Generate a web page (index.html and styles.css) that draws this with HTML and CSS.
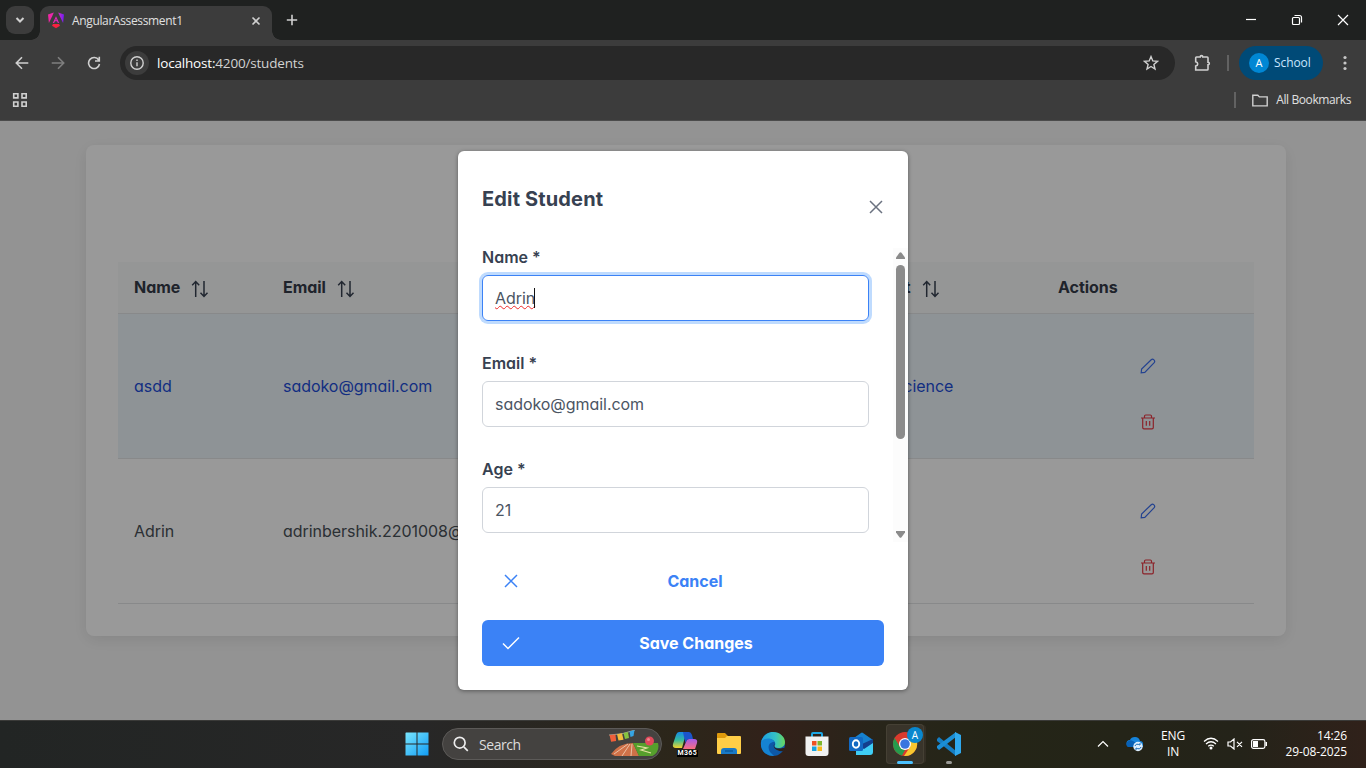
FILE: index.html
```html
<!DOCTYPE html>
<html lang="en">
<head>
<meta charset="utf-8">
<title>AngularAssessment1</title>
<link rel="stylesheet" href="styles.css">
</head>
<body>
<header class="browser">
  <div class="tabstrip">
    <div class="tab-search"><svg width="10" height="8" viewBox="0 0 10 8"><path d="M1.500 2 5 5.500 8.500 2" class="ln w2"/></svg></div>
    <div class="tab">
      <svg class="favicon" width="16" height="17" viewBox="0 0 16 17"><defs><linearGradient id="ng" x1="0" y1="0" x2="1" y2="0"><stop offset="0" stop-color="#f0279f"/><stop offset=".6" stop-color="#e026c0"/><stop offset="1" stop-color="#6a20f5"/></linearGradient></defs><path fill="url(#ng)" d="M5.800 .5 0 2.600 .9 11 4.300 4zM10.200.5 16 2.600 15.100 11 11.700 4zM8 4.200 11.200 11H9.900L9 9.200H7L6.100 11H4.800zM8 6.700 7.400 8.200H8.600z"/><path fill="#f6213f" d="M5 12h6l1 1.800L8 16.300 4 13.800z"/></svg>
      <span class="tab-title">AngularAssessment1</span>
      <svg class="tab-close" width="10" height="10" viewBox="0 0 10 10"><path class="ln" d="m1.500 1.500 7 7m0-7-7 7"/></svg>
    </div>
    <svg class="new-tab" width="12" height="12" viewBox="0 0 12 12"><path class="ln" d="M6 .8v10.400M.8 6h10.400"/></svg>
    <div class="window-controls">
      <svg width="12" height="12" viewBox="0 0 12 12"><path class="wl" d="M1 5.500h10"/></svg>
      <svg width="12" height="12" viewBox="0 0 12 12"><rect class="wl" x="1.500" y="3.500" width="7" height="7" rx="1"/><path class="wl" d="M3.500 1.500h5a2 2 0 0 1 2 2v5"/></svg>
      <svg width="12" height="12" viewBox="0 0 12 12"><path class="wl" d="m1 1 10 10m0-10L1 11"/></svg>
    </div>
  </div>
  <div class="toolbar">
    <svg width="14" height="14" viewBox="0 0 14 14"><path class="ln" d="M13.300 7H1.500M7 1.300 1.300 7 7 12.700"/></svg>
    <svg class="dim" width="14" height="14" viewBox="0 0 14 14"><path class="ln" d="M.7 7h11.800M7 1.300 12.700 7 7 12.700"/></svg>
    <svg width="14" height="14" viewBox="0 0 14 14"><path class="ln" d="M11.700 4A5.500 5.500 0 1 0 12.500 8M12.300.8v4.200H8"/></svg>
    <div class="omnibox">
      <span class="site-info"><svg width="14" height="14" viewBox="0 0 14 14"><circle class="ln thin" cx="7" cy="7" r="6.200"/><path class="ln thin" d="M7 6.200v4M7 3.600v1.400"/></svg></span>
      <span class="url">localhost:<i>4200/students</i></span>
      <svg class="star" width="16" height="16" viewBox="0 0 16 16"><path class="ln thin" d="m8 1.600 1.800 4.300 4.700.4-3.600 3.100 1.100 4.600L8 11.500 4 14l1.100-4.600L1.500 6.300l4.700-.4z"/></svg>
    </div>
    <svg class="puzzle" width="18" height="18" viewBox="0 0 18 18"><path class="ln" d="M3.500 3h3.700c0-1.800 2.600-1.800 2.600 0h4.400q.8 0 .8.800v4.400c1.800 0 1.800 2.600 0 2.600v4.400q0 .8-.8.800H2.700v-4c2.700-.4 2.700-3.700 0-4.200V3.800q0-.8.800-.8z"/></svg>
    <span class="divider"></span>
    <div class="profile"><b>A</b><span>School</span></div>
    <svg class="menu" width="4" height="16" viewBox="0 0 4 16"><g fill="#c7c7c7"><circle cx="2" cy="2.500" r="1.600"/><circle cx="2" cy="8" r="1.600"/><circle cx="2" cy="13.500" r="1.600"/></g></svg>
  </div>
  <div class="bookmarks">
    <svg width="16" height="16" viewBox="0 0 16 16"><path class="ln" d="M1.700 1.700h4.200v4.200H1.700zM10 1.700h4.200v4.200H10zM1.700 10h4.200v4.200H1.700zM10 10h4.200v4.200H10z"/></svg>
    <span class="divider"></span>
    <svg width="16" height="13" viewBox="0 0 16 13"><path class="ln thin" d="M.8 1.200h5l1.600 1.700h7.800v9H.8z"/></svg>
    <span>All Bookmarks</span>
  </div>
</header>

<main class="page">
  <section class="card">
    <div class="table">
      <div class="row head">
        <span>Name <svg class="sort" width="18" height="18" viewBox="0 0 18 18"><path d="M4.700 17V2M1.200 5.200 4.700 1.600l3.500 3.600M13 1v15M9.500 12.800l3.500 3.600 3.500-3.600"/></svg></span>
        <span>Email <svg class="sort" width="18" height="18" viewBox="0 0 18 18"><path d="M4.700 17V2M1.200 5.200 4.700 1.600l3.500 3.600M13 1v15M9.500 12.800l3.500 3.600 3.500-3.600"/></svg></span>
        <span class="dept">Department <svg class="sort" width="18" height="18" viewBox="0 0 18 18"><path d="M4.700 17V2M1.200 5.200 4.700 1.600l3.500 3.600M13 1v15M9.500 12.800l3.500 3.600 3.500-3.600"/></svg></span>
        <span>Actions</span>
      </div>
      <div class="row selected">
        <span>asdd</span><span>sadoko@gmail.com</span><span>Computer Science</span>
        <div class="actions">
          <svg class="edit" width="16" height="16" viewBox="0 0 16 16"><path d="M1.200 14.800 1.600 11 11.200 1.700c1.800-1.500 4.500 1 3 3L4.800 14.400z"/></svg>
          <svg class="trash" width="16" height="16" viewBox="0 0 16 16"><path d="M1 4h14M2.700 4v9.500a1.300 1.300 0 0 0 1.300 1.300h8a1.300 1.300 0 0 0 1.300-1.300V4M4.500 4V2.200A1.200 1.200 0 0 1 5.700 1h4.600a1.200 1.200 0 0 1 1.200 1.200V4M6.300 7v4.800M9.700 7v4.800"/></svg>
        </div>
      </div>
      <div class="row">
        <span>Adrin</span><span>adrinbershik.2201008@</span><span></span>
        <div class="actions">
          <svg class="edit" width="16" height="16" viewBox="0 0 16 16"><path d="M1.200 14.800 1.600 11 11.200 1.700c1.800-1.500 4.500 1 3 3L4.800 14.400z"/></svg>
          <svg class="trash" width="16" height="16" viewBox="0 0 16 16"><path d="M1 4h14M2.700 4v9.500a1.300 1.300 0 0 0 1.300 1.300h8a1.300 1.300 0 0 0 1.300-1.300V4M4.500 4V2.200A1.200 1.200 0 0 1 5.700 1h4.600a1.200 1.200 0 0 1 1.200 1.200V4M6.300 7v4.800M9.700 7v4.800"/></svg>
        </div>
      </div>
    </div>
  </section>
  <div class="mask">
    <div class="dialog">
      <div class="dialog-head"><h2>Edit Student</h2><svg width="14" height="14" viewBox="0 0 14 14"><path d="m1 1 12 12m0-12L1 13"/></svg></div>
      <div class="dialog-body">
        <form class="fields">
          <div class="field"><label>Name *</label><div class="input focus"><span class="typo">Adrin</span><i class="caret"></i></div></div>
          <div class="field"><label>Email *</label><div class="input">sadoko@gmail.com</div></div>
          <div class="field"><label>Age *</label><div class="input">21</div></div>
        </form>
        <div class="scrollbar">
          <svg width="9" height="7" viewBox="0 0 9 7"><path d="M3.500.8q1-1 2 0L9 5.500V7H0V5.500z"/></svg>
          <div class="thumb"></div>
          <svg class="down" width="9" height="7" viewBox="0 0 9 7"><path d="M3.500 6.200q1 1 2 0L9 1.500V0H0v1.500z"/></svg>
        </div>
      </div>
      <div class="dialog-foot">
        <div class="btn text"><svg width="14" height="14" viewBox="0 0 14 14"><path d="m1 1 12 12m0-12L1 13"/></svg><span>Cancel</span></div>
        <div class="btn primary"><svg width="18" height="14" viewBox="0 0 18 14"><path d="m1 7.500 5 5L17 1.500"/></svg><span>Save Changes</span></div>
      </div>
    </div>
  </div>
</main>

<footer class="taskbar">
  <div class="apps">
    <svg class="start" width="24" height="24" viewBox="0 0 24 24"><defs><linearGradient id="win" gradientUnits="userSpaceOnUse" x1="0" y1="0" x2="24" y2="24"><stop offset="0" stop-color="#7be7fd"/><stop offset="1" stop-color="#0f9bf5"/></linearGradient></defs><path fill="url(#win)" d="M1 .5h10.500v11H.5V1zM12.500.5h11v11h-11zM.5 12.500h11v11H.5zM12.500 12.500h11v11h-11z"/></svg>
    <div class="search">
      <svg width="16" height="16" viewBox="0 0 16 16"><circle cx="6.700" cy="6.700" r="5.400"/><path d="m10.800 10.800 4 4"/></svg>
      <span>Search</span>
      <svg class="sport" width="50" height="28" viewBox="0 0 50 28"><path d="M0 5Q13 5 26 0" stroke="#c8c8b8" stroke-width=".7" fill="none"/><path fill="#f0603a" d="m.5 5 6-.6.600 6.500-5 .8z"/><path fill="#f5bc3c" d="m8 4.300 5-1 1.500 6.500-5 .8z"/><path fill="#86c440" d="m14.500 3 4.500-1 1 6-4 1z"/><path fill="#35a5e4" d="m20.500 1.500 5-1.500-1 6-3 1z"/><path fill="#cf7148" d="M2 24Q10 13 24 13l6 13H6z"/><path fill="#569f2c" d="M24 13h25l.5 3q0 7-6 10H30z"/><path stroke="#f0d4bd" stroke-width=".8" fill="none" d="m5 24 14-10M13 26l8-12M22 26l1-12"/><path stroke="#e3e0a0" stroke-width="1.200" fill="none" d="m28 16 10 2-6 2 10 3"/><circle cx="40.500" cy="11" r="4.500" fill="#e0485a"/><circle cx="39.500" cy="9.500" r="1.500" fill="#ef8790"/></svg>
    </div>
    <div class="app m365"><svg width="26" height="26" viewBox="0 0 26 26"><defs><linearGradient id="cpa" x1="0" y1="0" x2="0" y2="1"><stop offset="0" stop-color="#1689e8"/><stop offset=".5" stop-color="#35bb9c"/><stop offset="1" stop-color="#f5d32b"/></linearGradient><linearGradient id="cpb" x1="0" y1="0" x2="0" y2="1"><stop offset="0" stop-color="#a65bea"/><stop offset="1" stop-color="#fb6e80"/></linearGradient></defs><path fill="url(#cpa)" d="M7 1h9q-2 1-3 5l-3 11H4Q0 17 1 13L4 4Q5 1 7 1z"/><path fill="#1b55cc" d="M11 1h6q2 0 3 3l1 4h-4q-2 0-3.500 4L12 6z"/><path fill="url(#cpb)" d="M17 8h5q4 0 3 4l-2 6H11l3-7q1-3 3-3z"/></svg><b>M365</b></div>
    <div class="app"><svg width="26" height="24" viewBox="0 0 26 24"><path fill="#df9a0c" d="M1 2Q1 1 2 1h7l3 3h11v6H1z"/><path fill="#ffce47" d="M1 6h8l2-2h13q1 0 1 1v16q0 1-1 1H2q-1 0-1-1z"/><path fill="#1979c6" d="M5 22v-3q0-3 3-3h10q3 0 3 3v3z"/><path stroke="#075291" stroke-width="1.200" d="M9 19h8"/></svg></div>
    <div class="app"><svg width="26" height="26" viewBox="0 0 26 26"><defs><linearGradient id="eda"><stop offset="0" stop-color="#1b9de2"/><stop offset=".6" stop-color="#35c1c5"/><stop offset="1" stop-color="#68d75c"/></linearGradient></defs><circle cx="13" cy="13" r="12" fill="#0d58a8"/><path fill="url(#eda)" d="M1 11C3 4 8 1 13 1c7 0 12 5 12 10 0 4-3 6-7 6-3 0-4-1-3-3 2-5-8-9-14-3z"/><path fill="#1583d3" d="M1 11c5-6 13-3 13 0-5 0-7 5-4 10l4 4C5 25 0 19 1 11z"/><path fill="#2d211a" d="M15 12c-2 3-1 7 8 5l2 0-2 3c-6 1-12-4-8-8z"/></svg></div>
    <div class="app"><svg width="24" height="26" viewBox="0 0 24 26"><path fill="none" stroke="#1ca7e5" stroke-width="2" d="M7 6V3q0-1 1-1h8q1 0 1 1v3"/><path fill="#f1f1f1" d="M.5 5.500h23V22q0 3-3 3h-17q-3 0-3-3z"/><path fill="#ed5023" d="M7 10h4.500v4.500H7z"/><path fill="#7eb62c" d="M12.500 10H17v4.500h-4.500z"/><path fill="#16a2df" d="M7 15.500h4.500V20H7z"/><path fill="#f8b719" d="M12.500 15.500H17V20h-4.500z"/></svg></div>
    <div class="app"><svg width="26" height="26" viewBox="0 0 26 26"><path fill="#1681ce" d="m3 9 10-7q1-1 2 0l10 7v8H3z"/><path fill="#133f8d" d="m14 13 11-5v5l-11 8z"/><path fill="#3fcef5" d="M8 24V14l8 4 9-6v9q0 3-3 3z"/><rect x="1" y="6" width="14" height="14" rx="1.500" fill="#1269c3"/><ellipse cx="8" cy="13" rx="3.200" ry="3.700" fill="none" stroke="#fff" stroke-width="1.900"/></svg></div>
    <div class="app active"><svg width="26" height="26" viewBox="0 0 26 26"><circle cx="13" cy="13" r="12" fill="#d93a2d"/><path fill="#269b4d" d="M2.600 7 8 16l5 3-3 5.600A12 12 0 0 1 2.600 7z"/><path fill="#f8c62f" d="M13 8h11a12 12 0 0 1-12 17l6-9z"/><circle cx="13" cy="13" r="6" fill="#fff"/><circle cx="13" cy="13" r="4.800" fill="#3975df"/></svg><b class="badge">A</b></div>
    <div class="app code"><svg width="26" height="26" viewBox="0 0 26 26"><path fill="#157dc2" d="m1 8 2-2 17 14v5L1 10z"/><path fill="#1b8ed5" d="m1 17 2 2L20 6V1L1 15z"/><path fill="#2fa8ed" d="m19 1 6 3v18l-6 3z"/></svg></div>
  </div>
  <div class="tray">
    <svg class="chev" width="12" height="8" viewBox="0 0 12 8"><path class="wl" d="m1 6.500 5-5 5 5"/></svg>
    <svg class="cloud" width="18" height="16" viewBox="0 0 18 16"><path fill="#1684dc" d="M4 11a3.500 3.500 0 0 1 0-7Q5 1 9 1q4 0 5 4 3 0 3 3v3z"/><path fill="#0760b6" d="M1 6q3-3 6-1l6 4-2 2H4Q-1 11 1 6z"/><circle cx="12" cy="10.500" r="4.700" fill="#dceeff"/><path stroke="#176bb7" fill="none" d="M9 10q1-3 5-1V7m1 4q-1 3-5 1v2"/></svg>
    <div class="lang">ENG<br>IN</div>
    <svg class="wifi" width="16" height="13" viewBox="0 0 16 13"><path class="wl" d="M1 4.500q7-6.500 14 0M3 7q5-4.500 10 0M5.200 9.300q2.800-2.500 5.600 0"/><circle cx="8" cy="11" r="1.500" fill="#fff"/></svg>
    <svg class="mute" width="16" height="12" viewBox="0 0 16 12"><path class="wl" d="M1 4h2.500L7 1v10L3.500 8H1zM10 3.800l5 5m0-5-5 5"/></svg>
    <svg class="battery" width="17" height="10" viewBox="0 0 17 10"><rect class="wl" x=".6" y=".6" width="13.300" height="8.800" rx="1.800"/><path fill="#fff" d="M2 2h5v6H2zM14.500 3H16v4h-1.500z"/></svg>
    <div class="clock">14:26<br>29-08-2025</div>
  </div>
</footer>
</body>
</html>
```
FILE: styles.css
```css
* { box-sizing: border-box; }
body { margin: 0; width: 1366px; height: 768px; overflow: hidden; display: flex; flex-direction: column; font-family: "Open Sans", "Noto Sans", sans-serif; }
svg { display: block; flex: none; }
.ln { fill: none; stroke: #d0d0d0; stroke-width: 1.600; }
.ln.w2 { stroke-width: 2; }
.ln.thin { stroke-width: 1.400; }
.wl { fill: none; stroke: #fff; stroke-width: 1.200; }

/* browser chrome */
.browser { height: 121px; background: #3c3c3c; border-bottom: 1px solid #4b4b4b; color: #e0e0e0; }
.tabstrip { height: 40px; background: #1f2120; display: flex; align-items: center; padding-left: 6px; }
.tab-search { width: 28px; height: 28px; border-radius: 9px; background: #3c3c3c; display: grid; place-items: center; }
.tab { position: relative; align-self: flex-end; width: 232px; height: 34px; margin-left: 6px; padding: 0 11px 5px 8px; border-radius: 9px 9px 0 0; background: #3c3c3c; display: flex; align-items: center; }
.tab::before, .tab::after { content: ""; position: absolute; bottom: 0; width: 9px; height: 9px; }
.tab::before { left: -9px; background: radial-gradient(circle at 0 0, transparent 8.500px, #3c3c3c 9px); }
.tab::after { right: -9px; background: radial-gradient(circle at 100% 0, transparent 8.500px, #3c3c3c 9px); }
.tab-title { margin-left: 8px; font-size: 12px; letter-spacing: -.35px; }
.tab-close { margin-left: auto; }
.new-tab { margin-left: 14px; }
.window-controls { display: flex; gap: 34px; margin: 0 17px 0 auto; }
.toolbar { height: 46px; display: flex; align-items: center; padding: 0 20px 0 15px; gap: 22px; }
.dim { opacity: .45; }
.omnibox { width: 1055px; flex: none; height: 34px; margin-left: -3px; border-radius: 17px; background: #282828; display: flex; align-items: center; padding: 0 16px 0 5px; }
.site-info { width: 24px; height: 24px; border-radius: 50%; background: #3c3c3c; display: grid; place-items: center; }
.url { margin-left: 8px; font-size: 13.500px; letter-spacing: -.18px; color: #fff; }
.url i { font-style: normal; color: #d2d2d2; }
.star { margin-left: auto; }
.puzzle { margin-left: -4px; }
.divider { width: 2px; height: 16px; background: #626262; }
.toolbar .divider { flex: none; margin: 0 -12px 0 -6px; }
.profile { width: 84px; flex: none; height: 34px; border-radius: 17px; background: #004a77; color: #c9e6ff; display: flex; align-items: center; padding: 0 0 1px 10px; gap: 5px; font-size: 12px; letter-spacing: -.1px; }
.profile b { width: 20px; height: 20px; border-radius: 50%; background: #0087d4; color: #fff; display: grid; place-items: center; font-size: 11px; font-weight: 500; }
.menu { margin-left: -2px; }
.bookmarks { height: 28px; display: flex; align-items: center; padding: 0 15px 0 12px; font-size: 12px; letter-spacing: -.4px; }
.bookmarks .divider { margin: 0 16px 0 auto; }
.bookmarks span:last-child { margin-left: 8px; padding-bottom: 1px; }

/* page */
.page { position: relative; height: 599px; padding: 24px 80px 0 86px; background: #f6f6f6; font-family: Inter, sans-serif; font-size: 16px; font-feature-settings: "cv02", "cv03", "cv04", "cv11"; color: #495057; }
.card { height: 491px; padding: 117px 32px 0; border-radius: 8px; background: #fff; box-shadow: 0 4px 16px rgba(0, 0, 0, .09); }
.row { display: grid; grid-template-columns: 149px 531px 244px 212px; align-items: center; height: 145px; border-bottom: 1px solid #e3e5e7; letter-spacing: -.04px; }
.row > * { padding-left: 16px; white-space: nowrap; }
.head { height: 52px; padding-bottom: 2px; background: #f9fafb; color: #343b49; font-weight: 700; }
.head > span { display: flex; align-items: center; gap: 11px; }
.head > .dept { padding-left: 19px; }
.sort { fill: none; stroke: #374151; stroke-width: 1.500; position: relative; top: 2px; }
.selected { background: #edf5fb; color: #1d4ed8; }
.row .actions { padding: 16px 1px 0 0; display: flex; flex-direction: column; align-items: center; gap: 40px; }
.edit, .trash { fill: none; stroke-width: 1.200; }
.edit { stroke: #3b6ff0; }
.trash { stroke: #e83a45; }
.mask { position: absolute; inset: 0; background: rgba(0, 0, 0, .4); display: grid; place-items: center; }

/* dialog */
.dialog { width: 450px; height: 539px; border-radius: 6px; background: #fff; color: #4b5563; box-shadow: 0 1px 4px rgba(0, 0, 0, .4); display: flex; flex-direction: column; }
.dialog-head { height: 97px; padding: 34px 25px 0 24px; display: flex; justify-content: space-between; }
.dialog-head h2 { margin: 0; font-size: 20px; line-height: 28px; font-weight: 700; letter-spacing: .15px; color: #374151; }
.dialog-head svg { margin-top: 15px; fill: none; stroke: #6b7280; stroke-width: 1.500; }
.dialog-body { height: 294px; display: flex; justify-content: space-between; }
.fields { width: 411px; padding: 0 0 0 24px; }
.field { width: 387px; height: 106px; }
.field label { display: block; height: 27px; line-height: 19px; font-weight: 600; color: #374151; }
.input { height: 46px; padding: 0 12px; border: 1px solid #d1d5db; border-radius: 6px; display: flex; align-items: center; letter-spacing: -.05px; }
.focus { border-color: #3b82f6; box-shadow: 0 0 0 3px #bfdbfe; }
.typo { text-decoration: underline wavy #ef2b2b 1px; text-decoration-skip-ink: none; text-underline-offset: 1px; }
.caret { width: 1px; height: 20px; margin-left: -1px; background: #111; }
.scrollbar { width: 15px; padding: 4px 0 4px; background: #fcfcfc; display: flex; flex-direction: column; align-items: center; }
.scrollbar svg { fill: #8b8b8b; }
.thumb { width: 9px; height: 174px; margin-top: 6px; border-radius: 5px; background: #8b8b8b; }
.down { margin-top: auto; }
.dialog-foot { padding: 16px 24px 24px; display: flex; flex-direction: column; gap: 16px; }
.btn { height: 46px; border-radius: 6px; padding: 0 20px; display: flex; align-items: center; font-weight: 700; fill: none; stroke-width: 1.500; }
.btn span { flex: 1; text-align: center; padding-left: 8px; }
.btn.text { color: #3b82f6; stroke: #3b82f6; padding-left: 22px; }
.btn.primary { color: #fff; stroke: #fff; background: #3b82f6; }

/* taskbar */
.taskbar { height: 48px; border-top: 1px solid #3a3a38; background: linear-gradient(90deg, #222524 0, #272727 420px, #2c261a 680px, #32211a 780px, #28251a 880px, #242517 1000px, #242319 1240px, #30211a 1366px); display: flex; justify-content: space-between; color: #fff; }
.apps { display: flex; align-items: center; padding: 0 0 1px 405px; }
.search { width: 220px; height: 32px; margin: 0 4px 0 13px; border: 1px solid #5c5a58; border-radius: 16px; background: #444240; display: flex; align-items: center; padding: 0 2px 0 10px; }
.search svg:first-child { fill: none; stroke: #ededed; stroke-width: 1.700; }
.search span { margin-left: 10px; font-size: 14px; letter-spacing: -.45px; color: #ddd; }
.sport { margin-left: auto; }
.app { position: relative; width: 38px; height: 40px; margin-right: 6px; display: grid; place-items: center; border-radius: 4px; }
.m365 b { position: absolute; right: 6px; bottom: 7px; padding: 0 1px; font: 700 7px/7px Roboto, sans-serif; background: #000; letter-spacing: .3px; }
.active { background: #39342a; box-shadow: 0 0 0 1px #454034 inset, 3px 0 0 -1px #332e24; }
.active::after, .code::after { content: ""; position: absolute; bottom: 0; width: 16px; height: 3px; border-radius: 2px; background: #4cc2ff; }
.code::after { width: 6px; background: #9a9a96; }
.badge { position: absolute; right: 1px; top: 3px; width: 16px; height: 16px; border-radius: 50%; background: #0987ce; display: grid; place-items: center; font-size: 10px; font-weight: 500; }
.tray { display: flex; align-items: center; padding: 0 19px 2px 0; font-size: 12px; line-height: 16px; letter-spacing: -.1px; }
.cloud { margin-left: 18px; }
.lang { width: 30px; margin-left: 14px; text-align: center; }
.wifi { margin-left: 15px; }
.mute { margin-left: 8px; }
.battery { margin-left: 8px; }
.clock { width: 70px; margin-left: 9px; text-align: right; white-space: nowrap; }
.chev { margin-right: -1px; }
```
